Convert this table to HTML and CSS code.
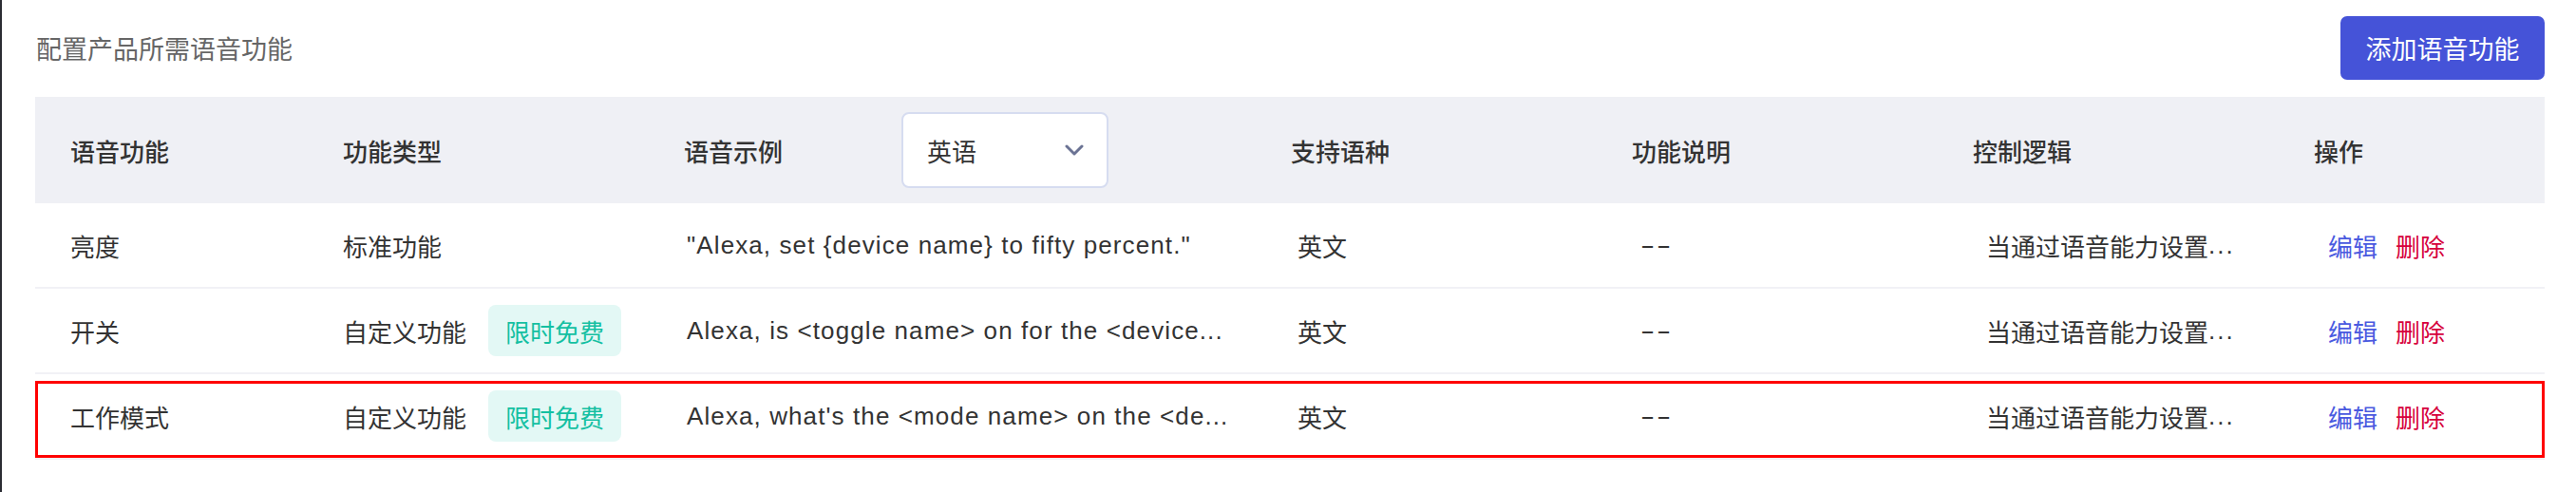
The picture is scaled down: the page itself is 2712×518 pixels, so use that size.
FILE: index.html
```html
<!DOCTYPE html>
<html lang="zh-CN">
<head>
<meta charset="utf-8">
<title>语音功能</title>
<link rel="stylesheet" href="styles.css">
</head>
<body>
<div class="page">
  <div class="topbar">
    <div class="title">配置产品所需语音功能</div>
    <button class="btn-primary">添加语音功能</button>
  </div>
  <div class="table">
    <div class="row head">
      <div class="cell c1">语音功能</div>
      <div class="cell c2">功能类型</div>
      <div class="cell c3">
        <span class="head-label">语音示例</span>
        <div class="select">
          <span>英语</span>
          <svg class="chev" width="20" height="12" viewBox="0 0 20 12"><path d="M2 2 L10 10 L18 2" fill="none" stroke="#6b7394" stroke-width="3" stroke-linecap="round" stroke-linejoin="round"/></svg>
        </div>
      </div>
      <div class="cell c4">支持语种</div>
      <div class="cell c5">功能说明</div>
      <div class="cell c6">控制逻辑</div>
      <div class="cell c7">操作</div>
    </div>
    <div class="row body">
      <div class="cell c1">亮度</div>
      <div class="cell c2">标准功能</div>
      <div class="cell c3 latin">"Alexa, set {device name} to fifty percent."</div>
      <div class="cell c4">英文</div>
      <div class="cell c5"><span class="dash">--</span></div>
      <div class="cell c6">当通过语音能力设置<span class="dots">...</span></div>
      <div class="cell c7"><a class="link edit">编辑</a><a class="link del">删除</a></div>
    </div>
    <div class="row body">
      <div class="cell c1">开关</div>
      <div class="cell c2">自定义功能<span class="badge">限时免费</span></div>
      <div class="cell c3 latin">Alexa, is &lt;toggle name&gt; on for the &lt;device...</div>
      <div class="cell c4">英文</div>
      <div class="cell c5"><span class="dash">--</span></div>
      <div class="cell c6">当通过语音能力设置<span class="dots">...</span></div>
      <div class="cell c7"><a class="link edit">编辑</a><a class="link del">删除</a></div>
    </div>
    <div class="row body marked">
      <div class="cell c1">工作模式</div>
      <div class="cell c2">自定义功能<span class="badge">限时免费</span></div>
      <div class="cell c3 latin">Alexa, what's the &lt;mode name&gt; on the &lt;de...</div>
      <div class="cell c4">英文</div>
      <div class="cell c5"><span class="dash">--</span></div>
      <div class="cell c6">当通过语音能力设置<span class="dots">...</span></div>
      <div class="cell c7"><a class="link edit">编辑</a><a class="link del">删除</a></div>
    </div>
  </div>
</div>
</body>
</html>
```
FILE: styles.css
```css
html, body {
  margin: 0;
  padding: 0;
  background: #ffffff;
}
body {
  font-family: "Liberation Sans", "Noto Sans CJK SC", sans-serif;
  color: #333333;
  font-size: 26px;
}
.page {
  border-left: 2px solid #2b2c33;
  min-height: 518px;
  box-sizing: border-box;
  padding: 17px 33px 0 35px;
}
.topbar {
  display: flex;
  justify-content: space-between;
  align-items: center;
  height: 67px;
}
.title {
  font-size: 27px;
  color: #666666;
  padding-left: 1px;
}
.btn-primary {
  height: 67px;
  width: 215px;
  border: none;
  border-radius: 7px;
  background: #4553d8;
  color: #ffffff;
  font-family: "Noto Sans CJK SC", sans-serif;
  font-size: 27px;
  padding: 0;
}
.table {
  margin-top: 18px;
}
.row {
  display: grid;
  grid-template-columns: 287px 359px 639px 359px 359px 359px 1fr;
  align-items: center;
}
.row.head {
  height: 112px;
  background: #eff0f5;
  font-weight: 500;
  font-size: 26px;
  color: #333333;
}
.row.body {
  height: 88px;
  border-bottom: 2px solid #f1f1f6;
  position: relative;
}
.cell {
  padding-left: 37px;
  white-space: nowrap;
  display: flex;
  align-items: center;
}
.row.body .c3 { padding-left: 40px; }
.row.body .c4 { padding-left: 44px; }
.row.body .c5 { padding-left: 46px; }
.row.body .c6 { padding-left: 51px; }
.row.body .c7 { padding-left: 52px; }
.head-label {
  margin-right: 125px;
}
.select {
  width: 218px;
  height: 80px;
  box-sizing: border-box;
  border: 2px solid #d6dcf0;
  border-radius: 8px;
  background: #ffffff;
  display: flex;
  align-items: center;
  justify-content: space-between;
  padding: 0 24px 0 25px;
  font-weight: 400;
}
.chev {
  display: block;
}
.latin {
  font-family: "Liberation Sans", sans-serif;
  letter-spacing: 1.1px;
}
.dash {
  display: inline-block;
  letter-spacing: 1px;
  transform: scaleX(1.75);
  transform-origin: left center;
}
.dots {
  letter-spacing: 2px;
}
.badge {
  margin-left: 23px;
  background: #e3f8f5;
  color: #14c0a2;
  border-radius: 8px;
  height: 54px;
  padding: 0 18px;
  display: inline-flex;
  align-items: center;
}
.link {
  cursor: pointer;
}
.link.edit {
  color: #4a5ae0;
  margin-right: 19px;
}
.link.del {
  color: #d6003c;
}
.row.marked::after {
  content: "";
  position: absolute;
  left: 0;
  right: 0;
  top: 7px;
  bottom: 0;
  border: 3px solid #ff0000;
  pointer-events: none;
}
```
